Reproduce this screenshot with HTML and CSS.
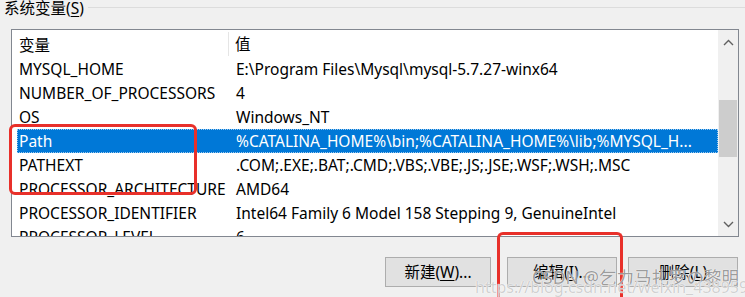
FILE: index.html
```html
<!DOCTYPE html>
<html lang="zh-CN">
<head>
<meta charset="utf-8">
<title>系统变量</title>
<link rel="stylesheet" href="styles.css">
</head>
<body>
<div class="group-title">
  <span class="label">系统变量(<u>S</u>)</span>
  <span class="rule"></span>
</div>
<div class="listbox">
  <div class="list">
    <div class="header"><div class="c1">变量</div><div class="c2">值</div></div>
    <div class="row"><div class="c1">MYSQL_HOME</div><div class="c2">E:\Program Files\Mysql\mysql-5.7.27-winx64</div></div>
    <div class="row"><div class="c1">NUMBER_OF_PROCESSORS</div><div class="c2">4</div></div>
    <div class="row"><div class="c1">OS</div><div class="c2">Windows_NT</div></div>
    <div class="row selected"><div class="c1">Path</div><div class="c2">%CATALINA_HOME%\bin;%CATALINA_HOME%\lib;%MYSQL_H...</div></div>
    <div class="row"><div class="c1">PATHEXT</div><div class="c2">.COM;.EXE;.BAT;.CMD;.VBS;.VBE;.JS;.JSE;.WSF;.WSH;.MSC</div></div>
    <div class="row"><div class="c1">PROCESSOR_ARCHITECTURE</div><div class="c2">AMD64</div></div>
    <div class="row"><div class="c1">PROCESSOR_IDENTIFIER</div><div class="c2">Intel64 Family 6 Model 158 Stepping 9, GenuineIntel</div></div>
    <div class="row"><div class="c1">PROCESSOR_LEVEL</div><div class="c2">6</div></div>
  </div>
  <div class="scrollbar">
    <div class="arrow"><svg width="11" height="7" viewBox="0 0 11 7"><path d="M1 6 L5.5 1.5 L10 6" fill="none" stroke="#606060" stroke-width="1.4"/></svg></div>
    <div class="track"><div class="thumb"></div></div>
    <div class="arrow"><svg width="11" height="7" viewBox="0 0 11 7"><path d="M1 1 L5.5 5.5 L10 1" fill="none" stroke="#606060" stroke-width="1.4"/></svg></div>
  </div>
</div>
<div class="buttons">
  <div class="btn btn-new">新建(<u>W</u>)...</div>
  <div class="btn btn-edit">编辑(<u>I</u>)...</div>
  <div class="btn btn-del">删除(<u>L</u>)</div>
</div>
<div class="mark mark-path"></div>
<div class="mark mark-edit"></div>
<div class="wm wm-name">CSDN @乞力马扎罗の黎明</div>
<div class="wm wm-url">https://blog.csdn.net/weixin_43895911</div>
</body>
</html>
```
FILE: styles.css
```css
html, body {
  margin: 0;
  padding: 0;
}
body {
  width: 745px;
  height: 297px;
  overflow: hidden;
  position: relative;
  background: #f0f0f0;
  color: #000;
  font-family: "Noto Sans", "Noto Sans CJK SC", sans-serif;
  font-size: 15.5px;
}
u {
  text-decoration-thickness: 1px;
  text-underline-offset: 2px;
}
.group-title {
  display: flex;
  align-items: flex-start;
  height: 16px;
  padding-left: 4px;
}
.group-title .label {
  line-height: 16px;
  white-space: nowrap;
}
.group-title .rule {
  flex: 1;
  margin: 7px 0 0 4px;
  border-top: 1px solid #dcdcdc;
}
.listbox {
  display: flex;
  box-sizing: border-box;
  margin: 13px 0 0 11px;
  width: 728px;
  height: 208px;
  border: 1px solid #828790;
  background: #fff;
}
.list {
  flex: 1;
  overflow: hidden;
  white-space: nowrap;
}
.header {
  display: flex;
  height: 27px;
  line-height: 27px;
  padding-top: 1px;
  box-sizing: border-box;
}
.header .c1 {
  width: 217px;
  padding-left: 7px;
  box-sizing: border-box;
  border-right: 1px solid #e5e5e5;
  margin-top: 1px;
  height: 24px;
  line-height: 27px;
}
.header .c2 {
  padding-left: 6px;
}
.row {
  display: flex;
  height: 24px;
  line-height: 24px;
  margin-left: 5px;
  box-sizing: border-box;
}
.row .c1 {
  width: 213px;
  flex: none;
  padding-left: 2px;
  box-sizing: border-box;
  overflow: visible;
}
.row .c2 {
  padding-left: 6px;
}
.row.selected {
  background: #0078d7;
  color: #fff;
  outline: 1px dotted #9cc9ee;
  outline-offset: -1px;
}
.scrollbar {
  width: 20px;
  flex: none;
  display: flex;
  flex-direction: column;
  background: #f0f0f0;
}
.arrow {
  height: 24px;
  display: flex;
  align-items: center;
  justify-content: center;
}
.track {
  flex: 1;
  padding-top: 46px;
}
.thumb {
  margin-left: 1px;
  width: 18px;
  height: 57px;
  background: #cdcdcd;
}
.buttons {
  display: flex;
  justify-content: flex-end;
  margin-top: 20px;
  padding-right: 7px;
}
.btn {
  box-sizing: border-box;
  height: 30px;
  line-height: 28px;
  width: 110px;
  text-align: center;
  background: #e1e1e1;
  border: 1px solid #adadad;
  white-space: nowrap;
}
.btn-new {
  width: 106px;
  margin-right: 16px;
}
.btn-edit {
  margin-right: 11px;
}
.mark {
  position: absolute;
  box-sizing: border-box;
  border: 3.5px solid #e8302a;
  border-radius: 6px;
}
.mark-path {
  left: 9px;
  top: 124px;
  width: 188px;
  height: 71px;
}
.mark-edit {
  left: 497px;
  top: 232px;
  width: 126px;
  height: 65px;
  border-bottom: none;
  border-bottom-left-radius: 0;
  border-bottom-right-radius: 0;
}
.wm {
  position: absolute;
  white-space: nowrap;
  text-shadow: 0 0 1px #fff, 0 0 1px #fff;
}
.wm-name {
  left: 532px;
  top: 265px;
  font-size: 17.5px;
  line-height: 24px;
  color: rgba(70, 70, 70, 0.55);
}
.wm-url {
  left: 475px;
  top: 278px;
  font-size: 16px;
  line-height: 19px;
  height: 19px;
  color: rgba(150, 150, 150, 0.45);
}
```
